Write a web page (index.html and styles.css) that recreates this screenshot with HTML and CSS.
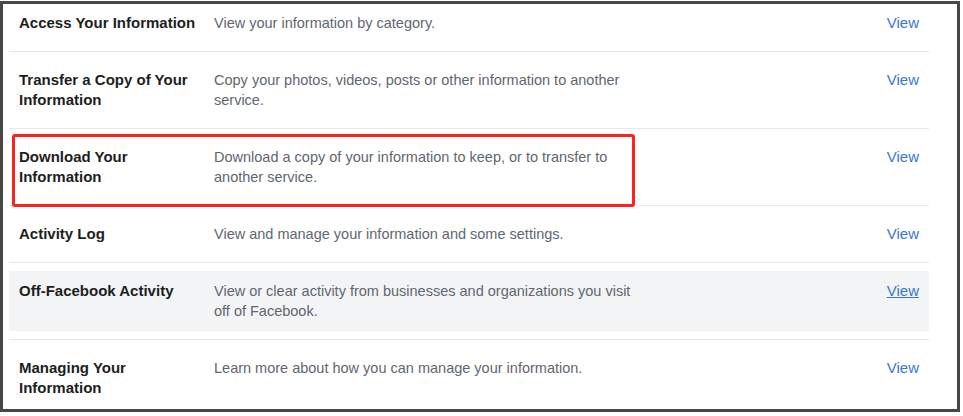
FILE: index.html
```html
<!DOCTYPE html>
<html lang="en">
<head>
    <meta charset="UTF-8">
    <meta name="viewport" content="width=device-width, initial-scale=1.0">
    <title>Your Facebook Information</title>
    <link rel="stylesheet" href="styles.css">
</head>
<body>
    <div class="frame">
        <ul class="list">
            <li class="row">
                <div class="item">
                    <div class="title">Access Your Information</div>
                    <div class="desc">View your information by category.</div>
                    <a class="view" href="#">View</a>
                </div>
            </li>
            <li class="row">
                <div class="item">
                    <div class="title">Transfer a Copy of Your Information</div>
                    <div class="desc">Copy your photos, videos, posts or other information to another service.</div>
                    <a class="view" href="#">View</a>
                </div>
            </li>
            <li class="row">
                <div class="item">
                    <div class="title">Download Your Information</div>
                    <div class="desc">Download a copy of your information to keep, or to transfer to another service.</div>
                    <a class="view" href="#">View</a>
                </div>
            </li>
            <li class="row">
                <div class="item">
                    <div class="title">Activity Log</div>
                    <div class="desc">View and manage your information and some settings.</div>
                    <a class="view" href="#">View</a>
                </div>
            </li>
            <li class="row">
                <div class="item hover">
                    <div class="title">Off-Facebook Activity</div>
                    <div class="desc">View or clear activity from businesses and organizations you visit off of Facebook.</div>
                    <a class="view" href="#">View</a>
                </div>
            </li>
            <li class="row">
                <div class="item">
                    <div class="title">Managing Your Information</div>
                    <div class="desc">Learn more about how you can manage your information.</div>
                    <a class="view" href="#">View</a>
                </div>
            </li>
        </ul>
        <!-- annotation box around the download row -->
        <div class="marker"></div>
    </div>
</body>
</html>
```

FILE: styles.css
```css
body { margin: 0; padding: 0; background: #fff; font-family: "Liberation Sans", Arial, sans-serif; font-size: 15px; }
.frame { position: relative; box-sizing: border-box; width: 960px; height: 411px; margin-top: 1px; border: 3px solid #474747; padding: 0 28px 0 6px; overflow: hidden; }
.list { list-style: none; margin: -10px 0 0 0; padding: 0; }
.row { border-top: 1px solid #e6e8eb; padding: 8px 0; }
.item { display: flex; align-items: flex-start; padding: 10px; line-height: 20px; }
.item.hover { background-color: #f3f4f6; }
.title { width: 185px; margin-right: 10px; font-weight: bold; color: #1c1e21; }
.desc { width: 430px; font-size: 14.5px; color: #606770; }
.view { margin-left: auto; color: #3a76d6; text-decoration: none; }
.item.hover .view { text-decoration: underline; }
.marker { position: absolute; left: 9px; top: 130px; width: 623px; height: 73px; box-sizing: border-box; border: 3px solid #ff2020; border-radius: 3px; }
```
